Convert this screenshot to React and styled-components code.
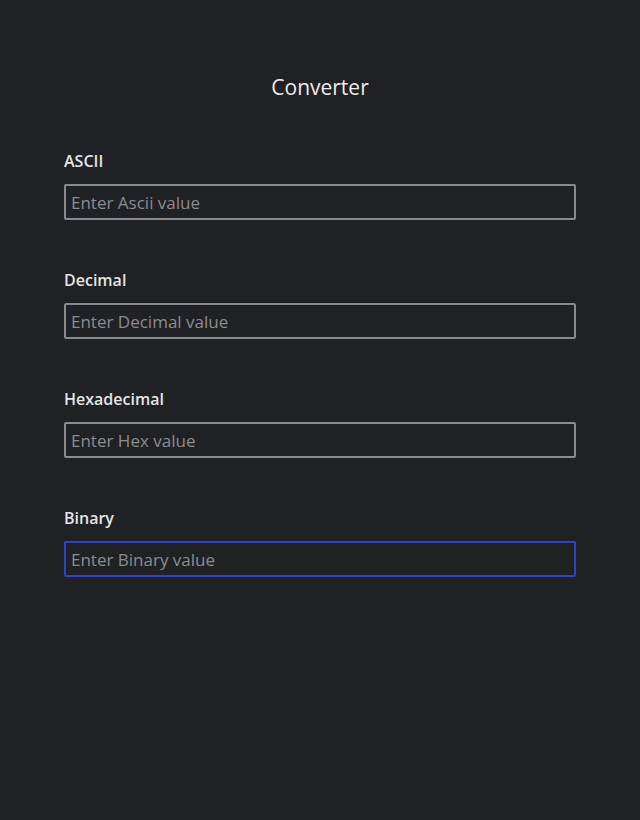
import React from 'react';
import styled, { createGlobalStyle } from 'styled-components';

const GlobalStyle = createGlobalStyle`
  html, body {
    margin: 0;
    padding: 0;
    background: #202125;
  }
  body {
    font-family: "Open Sans", "Noto Sans", sans-serif;
    color: #e6e6e6;
  }
`;

const Page = styled.main`
  min-height: 820px;
  padding: 73px 64px 0;
  box-sizing: border-box;
`;

const Title = styled.h1`
  margin: 0 0 49px;
  text-align: center;
  font-size: 21px;
  font-weight: 400;
  line-height: 28px;
  color: #ececec;
`;

const Form = styled.form`
  display: flex;
  flex-direction: column;
  gap: 49px;
`;

const Field = styled.div`
  display: flex;
  flex-direction: column;
  gap: 12px;
`;

const Label = styled.label`
  font-size: 16px;
  font-weight: 600;
  line-height: 22px;
  color: #e4e4e4;
`;

const Input = styled.input`
  box-sizing: border-box;
  width: 512px;
  height: 36px;
  padding: 0 5px;
  background: #202125;
  border: 2px solid ${(p) => (p.$active ? '#2d43c4' : '#8a8a8c')};
  border-radius: 2px;
  outline: none;
  font-family: inherit;
  font-size: 17px;
  color: #e6e6e6;

  &::placeholder {
    color: #8c8c8e;
  }
`;

const fields = [
  { id: 'ascii', label: 'ASCII', placeholder: 'Enter Ascii value' },
  { id: 'decimal', label: 'Decimal', placeholder: 'Enter Decimal value' },
  { id: 'hex', label: 'Hexadecimal', placeholder: 'Enter Hex value' },
  { id: 'binary', label: 'Binary', placeholder: 'Enter Binary value', active: true },
];

const App = () => {
  return (
    <>
      <GlobalStyle />
      <Page>
        <Title>Converter</Title>
        <Form onSubmit={(e) => e.preventDefault()}>
          {fields.map((f) => (
            <Field key={f.id}>
              <Label htmlFor={f.id}>{f.label}</Label>
              <Input id={f.id} type="text" placeholder={f.placeholder} $active={f.active} />
            </Field>
          ))}
        </Form>
      </Page>
    </>
  );
};

export default App;
